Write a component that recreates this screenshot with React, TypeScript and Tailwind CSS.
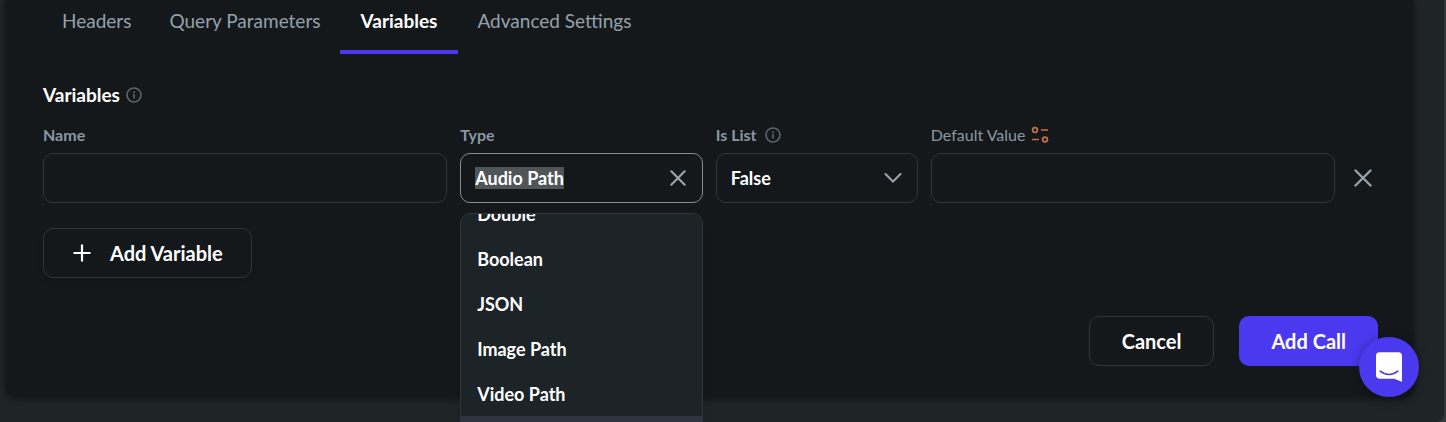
import { useEffect, useRef, useState } from 'react'

const TABS = ['Headers', 'Query Parameters', 'Variables', 'Advanced Settings']

const TYPES = ['Double', 'Boolean', 'JSON', 'Image Path', 'Video Path', 'Audio Path']

const fieldClass =
  'h-[50px] w-full rounded-[10px] border bg-transparent px-3.5 text-[18px] font-bold text-white outline-none'

function InfoIcon() {
  return (
    <svg viewBox="0 0 16 16" className="h-4 w-4 shrink-0 text-[#5c666d]" fill="none" aria-hidden="true">
      <circle cx="8" cy="8" r="7" stroke="currentColor" strokeWidth="1.6" />
      <path d="M8 7v4.5" stroke="currentColor" strokeWidth="1.7" />
      <path d="M8 4.3v1.6" stroke="currentColor" strokeWidth="1.7" />
    </svg>
  )
}

function CloseIcon({ className }: { className: string }) {
  return (
    <svg viewBox="0 0 18 18" className={className} fill="none" aria-hidden="true">
      <path d="M1.5 1.5l15 15M16.5 1.5l-15 15" stroke="currentColor" strokeWidth="2.4" strokeLinecap="round" />
    </svg>
  )
}

function BindIcon() {
  return (
    <svg viewBox="0 0 18 18" className="h-[18px] w-[18px]" fill="none" stroke="#c4704b" strokeWidth="1.7" aria-hidden="true">
      <circle cx="4" cy="4" r="2.4" />
      <path d="M10 4h7M1 13.5h7" />
      <circle cx="14" cy="13.5" r="2.4" />
    </svg>
  )
}

function TypeCombobox() {
  const [value, setValue] = useState('Audio Path')
  const inputRef = useRef<HTMLInputElement>(null)
  const listRef = useRef<HTMLUListElement>(null)

  useEffect(() => {
    inputRef.current?.focus({ preventScroll: true })
    inputRef.current?.select()
    if (listRef.current) listRef.current.scrollTop = 23
  }, [])

  return (
    <div className="relative">
      <input
        id="var-type"
        ref={inputRef}
        value={value}
        onChange={e => setValue(e.target.value)}
        role="combobox"
        aria-expanded="true"
        aria-controls="type-options"
        className={`${fieldClass} border-[#858d94] pr-12 selection:bg-[#505557] selection:text-white`}
      />
      <button
        type="button"
        aria-label="Clear type"
        onClick={() => setValue('')}
        className="absolute inset-y-0 right-0 flex w-[50px] items-center justify-center text-[#9ba5ae]"
      >
        <CloseIcon className="h-4 w-4" />
      </button>
      <ul
        id="type-options"
        ref={listRef}
        role="listbox"
        className="absolute inset-x-0 top-[60px] z-10 h-[240px] overflow-y-auto rounded-[10px] border border-[#30363b] bg-[#1d2428] shadow-lg [scrollbar-width:none]"
      >
        {TYPES.map(type => (
          <li
            key={type}
            role="option"
            aria-selected={type === value}
            onClick={() => setValue(type)}
            className={`flex h-[45px] items-center px-4 text-[18px] font-bold text-white ${
              type === value ? 'bg-[#30343f]' : ''
            }`}
          >
            {type}
          </li>
        ))}
      </ul>
    </div>
  )
}

export default function App() {
  const [tab, setTab] = useState('Variables')

  return (
    <div className="min-h-screen overflow-hidden bg-[#34373a] pr-0.5 font-['Lato','Open_Sans',sans-serif]">
      <div className="min-h-screen rounded-br-lg bg-[#1f2427] pl-[5px] pr-[30px]">
        <main className="rounded-b-[10px] bg-[#14181b] pb-[31px] pl-[38px] pr-9 shadow-[0_2px_6px_rgba(0,0,0,0.4)]">
          <div role="tablist" className="flex h-[54px]">
            {TABS.map(name => (
              <button
                key={name}
                type="button"
                role="tab"
                aria-selected={tab === name}
                onClick={() => setTab(name)}
                className={`border-b-4 pb-2 text-[19px] ${
                  tab === name
                    ? 'border-[#4b39ef] px-[21px] font-bold text-white'
                    : 'border-transparent px-[19px] text-[#95a1ac]'
                }`}
              >
                {name}
              </button>
            ))}
          </div>

          <div className="mt-[27px] flex h-7 items-center gap-1.5">
            <h2 className="text-[19px] font-bold text-white">Variables</h2>
            <InfoIcon />
          </div>

          <div className="mt-4 grid grid-cols-[10fr_6fr_5fr_10fr_30px] gap-x-[13px] gap-y-2 text-[16px] leading-5 text-[#8b97a2]">
            <label htmlFor="var-name" className="font-bold">Name</label>
            <label htmlFor="var-type" className="font-bold">Type</label>
            <div className="flex items-center gap-2">
              <label htmlFor="var-list" className="font-bold">Is List</label>
              <InfoIcon />
            </div>
            <div className="flex items-center gap-1.5">
              <label htmlFor="var-default">Default Value</label>
              <BindIcon />
            </div>
            <span />

            <input id="var-name" className={`${fieldClass} border-[#30353a]`} />
            <TypeCombobox />
            <div className="relative">
              <select id="var-list" defaultValue="False" className={`${fieldClass} appearance-none border-[#30353a]`}>
                <option>False</option>
                <option>True</option>
              </select>
              <svg
                viewBox="0 0 18 10"
                className="pointer-events-none absolute top-5 right-4 h-2.5 w-[18px]"
                fill="none"
                aria-hidden="true"
              >
                <path d="M1.5 1l7.5 7.5L16.5 1" stroke="#9ba5ae" strokeWidth="2" strokeLinecap="round" />
              </svg>
            </div>
            <input id="var-default" className={`${fieldClass} border-[#30353a]`} />
            <button type="button" aria-label="Remove variable" className="flex items-center justify-center text-[#95a1ac]">
              <CloseIcon className="h-[18px] w-[18px]" />
            </button>
          </div>

          <button
            type="button"
            className="mt-[25px] flex h-[50px] items-center gap-[18px] rounded-[10px] border border-[#30353a] px-7 text-[20px] font-bold text-white shadow-md"
          >
            <svg viewBox="0 0 20 20" className="h-5 w-5" fill="none" stroke="currentColor" strokeWidth="2.2" aria-hidden="true">
              <path d="M10 1.5v17M1.5 10h17" />
            </svg>
            Add Variable
          </button>

          <div className="mt-[38px] flex justify-end gap-[25px] text-[20px] font-bold text-white">
            <button type="button" className="h-[50px] rounded-[10px] border border-[#30353a] px-8">
              Cancel
            </button>
            <button type="button" className="h-[50px] rounded-[10px] bg-[#4b39ef] px-8">
              Add Call
            </button>
          </div>
        </main>
      </div>

      <button
        type="button"
        aria-label="Open chat"
        className="fixed right-[27px] bottom-[25px] z-20 flex h-[60px] w-[60px] items-center justify-center rounded-full bg-[#4b39ef] shadow-[0_2px_12px_rgba(0,0,0,0.35)]"
      >
        <svg viewBox="0 0 28 32" className="h-[30px] w-[26px]" aria-hidden="true">
          <path d="M28 32s-4.714-1.855-8.527-3.34H3.437C1.54 28.66 0 27.026 0 25.013V3.644C0 1.633 1.54 0 3.437 0h21.125c1.898 0 3.437 1.632 3.437 3.645v18.404H28V32z" fill="#fff" />
          <path d="M4.5 20.5c5.5 4.7 13.5 4.7 19 0" fill="none" stroke="#4b39ef" strokeWidth="1.7" strokeLinecap="round" />
        </svg>
      </button>
    </div>
  )
}
